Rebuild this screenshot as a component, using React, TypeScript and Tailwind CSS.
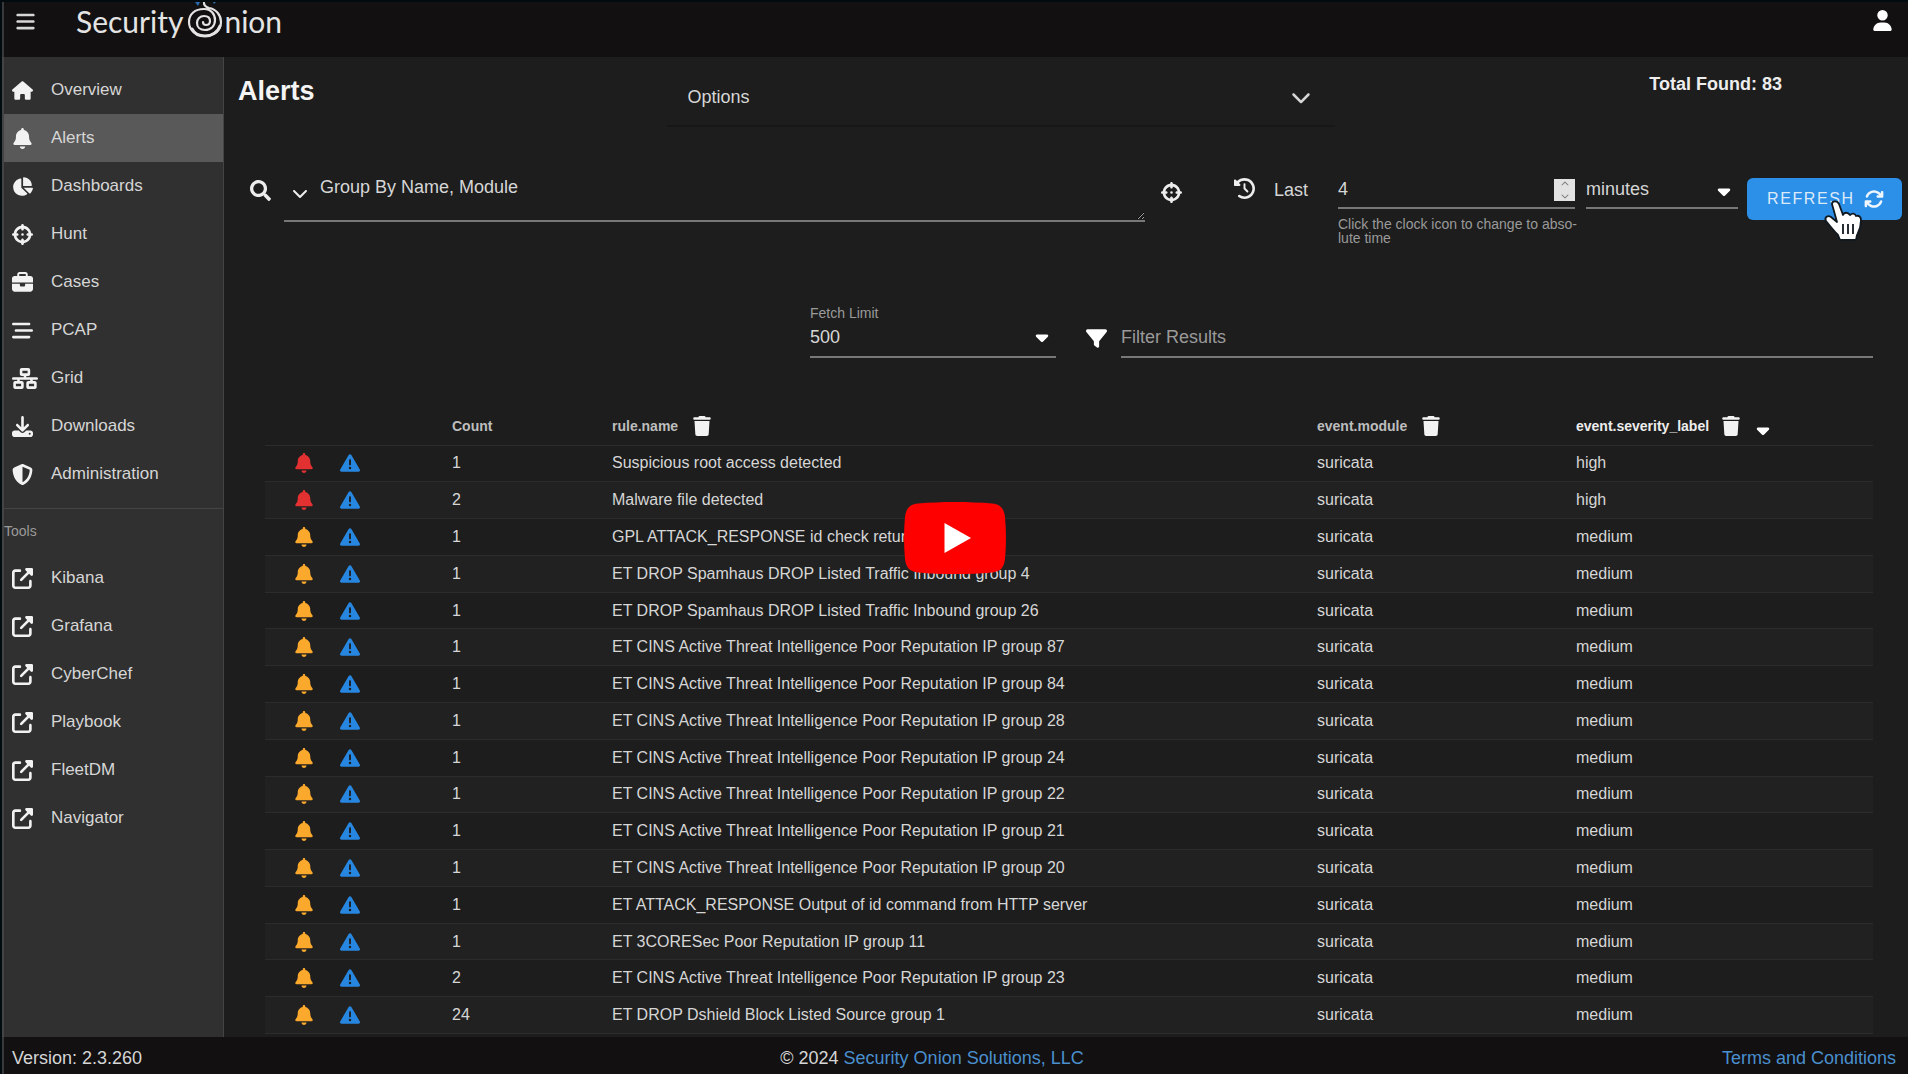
import React from 'react';
import {
  FaBars, FaHouse, FaBell, FaChartPie, FaCrosshairs, FaBriefcase, FaBarsStaggered, FaNetworkWired,
  FaDownload, FaShieldHalved, FaClockRotateLeft, FaFilter, FaUpRightFromSquare,
  FaTriangleExclamation, FaTrash, FaCaretDown, FaUser, FaArrowsRotate, FaChevronDown, FaChevronUp,
} from 'react-icons/fa6';
import { FaSearch } from 'react-icons/fa';

const nav = [
  { label: 'Overview', Icon: FaHouse },
  { label: 'Alerts', Icon: FaBell, active: true },
  { label: 'Dashboards', Icon: FaChartPie },
  { label: 'Hunt', Icon: FaCrosshairs },
  { label: 'Cases', Icon: FaBriefcase },
  { label: 'PCAP', Icon: FaBarsStaggered },
  { label: 'Grid', Icon: FaNetworkWired, wide: true },
  { label: 'Downloads', Icon: FaDownload },
  { label: 'Administration', Icon: FaShieldHalved },
];

const tools = ['Kibana', 'Grafana', 'CyberChef', 'Playbook', 'FleetDM', 'Navigator'];

const cins = (n: number): [number, string, string] => [1, `ET CINS Active Threat Intelligence Poor Reputation IP group ${n}`, 'medium'];

const rows: [number, string, string][] = [
  [1, 'Suspicious root access detected', 'high'],
  [2, 'Malware file detected', 'high'],
  [1, 'GPL ATTACK_RESPONSE id check returned root', 'medium'],
  [1, 'ET DROP Spamhaus DROP Listed Traffic Inbound group 4', 'medium'],
  [1, 'ET DROP Spamhaus DROP Listed Traffic Inbound group 26', 'medium'],
  cins(87), cins(84), cins(28), cins(24), cins(22), cins(21), cins(20),
  [1, 'ET ATTACK_RESPONSE Output of id command from HTTP server', 'medium'],
  [1, 'ET 3CORESec Poor Reputation IP group 11', 'medium'],
  [2, 'ET CINS Active Threat Intelligence Poor Reputation IP group 23', 'medium'],
  [24, 'ET DROP Dshield Block Listed Source group 1', 'medium'],
];

function Logo() {
  return (
    <a href="#home" aria-label="Security Onion" className="flex h-[38px] items-center font-[Lato,sans-serif] text-[30px] leading-9 text-[#e4e4e4]">
      <span>Security</span>
      <svg viewBox="0 0 38 38" className="ml-[3px] h-[38px] w-[38px]" fill="none" stroke="#e4e4e4" strokeLinecap="round">
        <path d="M9 0h5l-2 4z" fill="#2b6cb0" stroke="none" />
        <path d="M27 0h3l-2 2z" fill="#2b6cb0" stroke="none" />
        <path d="M18 1c0 3 2 4 5 5 7 1 12 7 12 14 0 8-7 14-16 14S3 28 3 20 9 7 18 7c7 0 11 5 11 11s-4 10-10 10c-5 0-8-3-8-7s3-7 7-7 6 2 6 5-2 4-4 4-3-1-3-3" strokeWidth="2.2" />
        <path d="M34 24c-2 6-8 10-15 10-6 0-11-3-13-7" strokeWidth="3" />
      </svg>
      <span>nion</span>
    </a>
  );
}

function HandCursor() {
  return (
    <svg viewBox="0 0 40 42" className="pointer-events-none absolute top-[22px] left-[76px] h-[42px] w-10" aria-hidden="true">
      <path
        d="M9 4c0-3 5-4 7 0l4 11c1-3 5-3 7 0 2-2 5-2 6 1 3-1 5 1 5 4 0 8-2 11-4 15l-1 5H17l-2-5C11 31 7 26 3 21c-2-4 2-6 5-4l6 5z"
        fill="#fff" stroke="#101820" strokeWidth="1.8" strokeLinejoin="round"
      />
      <path d="M20 24v10M25 24v10M30 24v10" stroke="#101820" strokeWidth="1.8" fill="none" />
    </svg>
  );
}

export default function App() {
  return (
    <div className="relative flex min-h-screen flex-col border-t-2 border-l-2 border-[#020c10] bg-[#1d1d1d] font-['Liberation_Sans',Arial,sans-serif] text-[#d6d6d6]">
      <header className="flex h-[55px] shrink-0 items-start justify-between border-l-2 border-[#39393b] bg-[#121011] pr-[15px]">
        <div className="flex items-center">
          <button aria-label="Menu" className="mr-10 ml-[11px] text-[21px] text-[#d6d6d6]"><FaBars /></button>
          <Logo />
        </div>
        <button aria-label="Account" className="mt-2 text-[21px] text-white"><FaUser /></button>
      </header>

      <div className="flex flex-1">
        <aside className="w-[222px] shrink-0 border-r border-l-2 border-[#444] bg-[#303030] pt-[9px]">
          <nav aria-label="Main">
            {nav.map(({ label, Icon, active, wide }) => (
              <a
                key={label}
                href={'#' + label.toLowerCase()}
                className={'flex h-12 items-center pl-2 text-[17px] ' + (active ? 'bg-[#595959]' : '')}
              >
                <span className="w-[39px] text-[21px] text-[#f2f2f2]"><Icon className={wide ? 'w-[26px]' : ''} /></span>
                <span>{label}</span>
              </a>
            ))}
          </nav>
          <div className="mt-[10px] border-t border-[#444] pt-3">
            <h2 className="text-sm text-[#9a9a9a]">Tools</h2>
            <nav aria-label="Tools" className="mt-[13px]">
              {tools.map((label) => (
                <a key={label} href={'#' + label.toLowerCase()} className="flex h-12 items-center pl-2 text-[17px]">
                  <span className="w-[39px] text-[21px] text-[#f2f2f2]"><FaUpRightFromSquare /></span>
                  <span>{label}</span>
                </a>
              ))}
            </nav>
          </div>
        </aside>

        <main className="flex min-w-0 flex-1 flex-col">
          <div className="grid h-[92px] grid-cols-[9fr_14fr_12fr] items-start pl-[14px]">
            <h1 className="pt-4 text-[27px] leading-9 font-bold text-[#f4f4f4]">Alerts</h1>
            <button className="flex h-[70px] items-center justify-between border-b-2 border-[#171717] pt-3 pr-6 pl-5 text-lg">
              <span>Options</span>
              <FaChevronDown className="text-xl" />
            </button>
            <p className="pt-[13px] pr-[126px] text-right text-lg font-bold text-[#ededed]">Total Found: 83</p>
          </div>

          <div className="flex items-start pr-[6px] pl-[26px]">
            <button aria-label="Search" className="mt-[31px] text-[21px] text-[#ededed]"><FaSearch /></button>
            <div className="ml-[13px] flex h-[73px] min-w-0 flex-1 items-start border-b-2 border-[#777]">
              <button aria-label="Query list" className="mt-9 ml-2 text-base text-[#ededed]"><FaChevronDown /></button>
              <textarea aria-label="Query" defaultValue="Group By Name, Module" className="ml-3 h-full min-w-0 flex-1 resize pt-6 text-lg outline-none" />
            </div>
            <button aria-label="Actions" className="mt-[33px] ml-4 text-[21px] text-[#ededed]"><FaCrosshairs /></button>
            <button aria-label="Relative time" className="mt-[29px] ml-[52px] text-[21px] text-[#ededed]"><FaClockRotateLeft /></button>
            <label htmlFor="duration" className="mt-[27px] ml-[19px] text-lg">Last</label>
            <div className="ml-[30px] w-[237px]">
              <div className="flex h-[60px] items-end justify-between border-b-2 border-[#777] pb-[6px]">
                <input id="duration" defaultValue="4" inputMode="numeric" className="min-w-0 flex-1 text-lg leading-6 outline-none" />
                <span className="flex h-[22px] w-[21px] flex-col items-center justify-center gap-1 bg-[#e2e2e2] text-[8px] text-[#777]">
                  <FaChevronUp />
                  <FaChevronDown />
                </span>
              </div>
              <p className="mt-2 text-sm leading-[14px] whitespace-nowrap text-[#9a9a9a]">Click the clock icon to change to abso-<br />lute time</p>
            </div>
            <div className="ml-[11px] flex h-[60px] w-[152px] items-end border-b-2 border-[#777] pb-[6px]">
              <select aria-label="Unit" className="min-w-0 flex-1 appearance-none text-lg leading-6 outline-none"><option>minutes</option></select>
              <FaCaretDown className="mr-1 text-xl text-white" />
            </div>
            <div className="relative mt-[29px] ml-[9px]">
              <button className="flex h-[42px] w-[155px] items-center justify-between rounded-md bg-[#2c8fe8] pr-[18px] pl-5 text-base tracking-widest text-[#dceaf8]">
                <span>REFRESH</span>
                <FaArrowsRotate className="text-xl text-[#eef6ff]" />
              </button>
              <HandCursor />
            </div>
          </div>

          <div className="mt-[58px] flex items-end pr-[35px]">
            <div className="ml-auto w-[246px] border-b-2 border-[#777] pb-[5px]">
              <label htmlFor="limit" className="block text-sm text-[#9a9a9a]">Fetch Limit</label>
              <div className="flex items-center">
                <select id="limit" className="min-w-0 flex-1 appearance-none text-lg outline-none"><option>500</option></select>
                <FaCaretDown className="mr-1 text-xl text-white" />
              </div>
            </div>
            <FaFilter className="mb-[9px] ml-[30px] text-[21px] text-white" />
            <input aria-label="Filter Results" placeholder="Filter Results" className="ml-[14px] w-[752px] border-b-2 border-[#777] pb-[5px] text-lg outline-none placeholder:text-[#9a9a9a]" />
          </div>

          <table className="mt-[49px] mr-[35px] ml-[41px] h-[627px] table-fixed text-left text-base">
            <colgroup>
              <col className="w-[187px]" />
              <col className="w-[160px]" />
              <col />
              <col className="w-[259px]" />
              <col className="w-[297px]" />
            </colgroup>
            <thead className="text-sm text-[#bdbdbd]">
              <tr className="h-[38px] border-b border-[#2c2c2c]">
                <th aria-label="Actions" />
                <th>Count</th>
                <th><span className="flex items-center gap-[14px]">rule.name <FaTrash className="text-xl text-[#f2f2f2]" /></span></th>
                <th><span className="flex items-center gap-[14px]">event.module <FaTrash className="text-xl text-[#f2f2f2]" /></span></th>
                <th className="text-[#ededed]"><span className="flex items-center gap-3">event.severity_label <FaTrash className="text-xl text-[#f2f2f2]" /><FaCaretDown className="mt-2 text-xl text-white" /></span></th>
              </tr>
            </thead>
            <tbody>
              {rows.map(([count, name, severity], i) => (
                <tr key={i} className="border-b border-[#2c2c2c] even:bg-[#212121]">
                  <td>
                    <span className="flex items-center pl-[29px] text-xl">
                      <button aria-label="Acknowledge" className={severity === 'high' ? 'text-[#e33131]' : 'text-[#fba92c]'}><FaBell /></button>
                      <button aria-label="Escalate" className="ml-[26px] text-[#2787e0]"><FaTriangleExclamation /></button>
                    </span>
                  </td>
                  <td>{count}</td>
                  <td className="whitespace-nowrap">{name}</td>
                  <td>suricata</td>
                  <td>{severity}</td>
                </tr>
              ))}
            </tbody>
          </table>
        </main>
      </div>

      <footer className="flex h-[37px] shrink-0 items-center justify-between border-l-2 border-[#39393b] bg-[#121011] pt-1 pr-3 pl-2 text-lg">
        <span>Version: 2.3.260</span>
        <span>© 2024 <a href="#company" className="text-[#4a8fce]">Security Onion Solutions, LLC</a></span>
        <a href="#terms" className="text-[#4a8fce]">Terms and Conditions</a>
      </footer>

      <button aria-label="Play" className="absolute top-1/2 left-1/2 -translate-x-1/2 -translate-y-1/2">
        <svg viewBox="0 0 102 72" className="h-[72px] w-[102px]">
          <path d="M14 1.500C37-.5 65-.5 88 1.500 97 2.500 100 7 101 15c1.300 14 1.300 28 0 42-1 8-4 12.500-13 13.500-23 2-51 2-74 0C5 69.500 2 65 1 57-.3 43-.3 29 1 15 2 7 5 2.500 14 1.500z" fill="#f00" />
          <path d="M40.500 21v30L67 36z" fill="#fff" />
        </svg>
      </button>
    </div>
  );
}
